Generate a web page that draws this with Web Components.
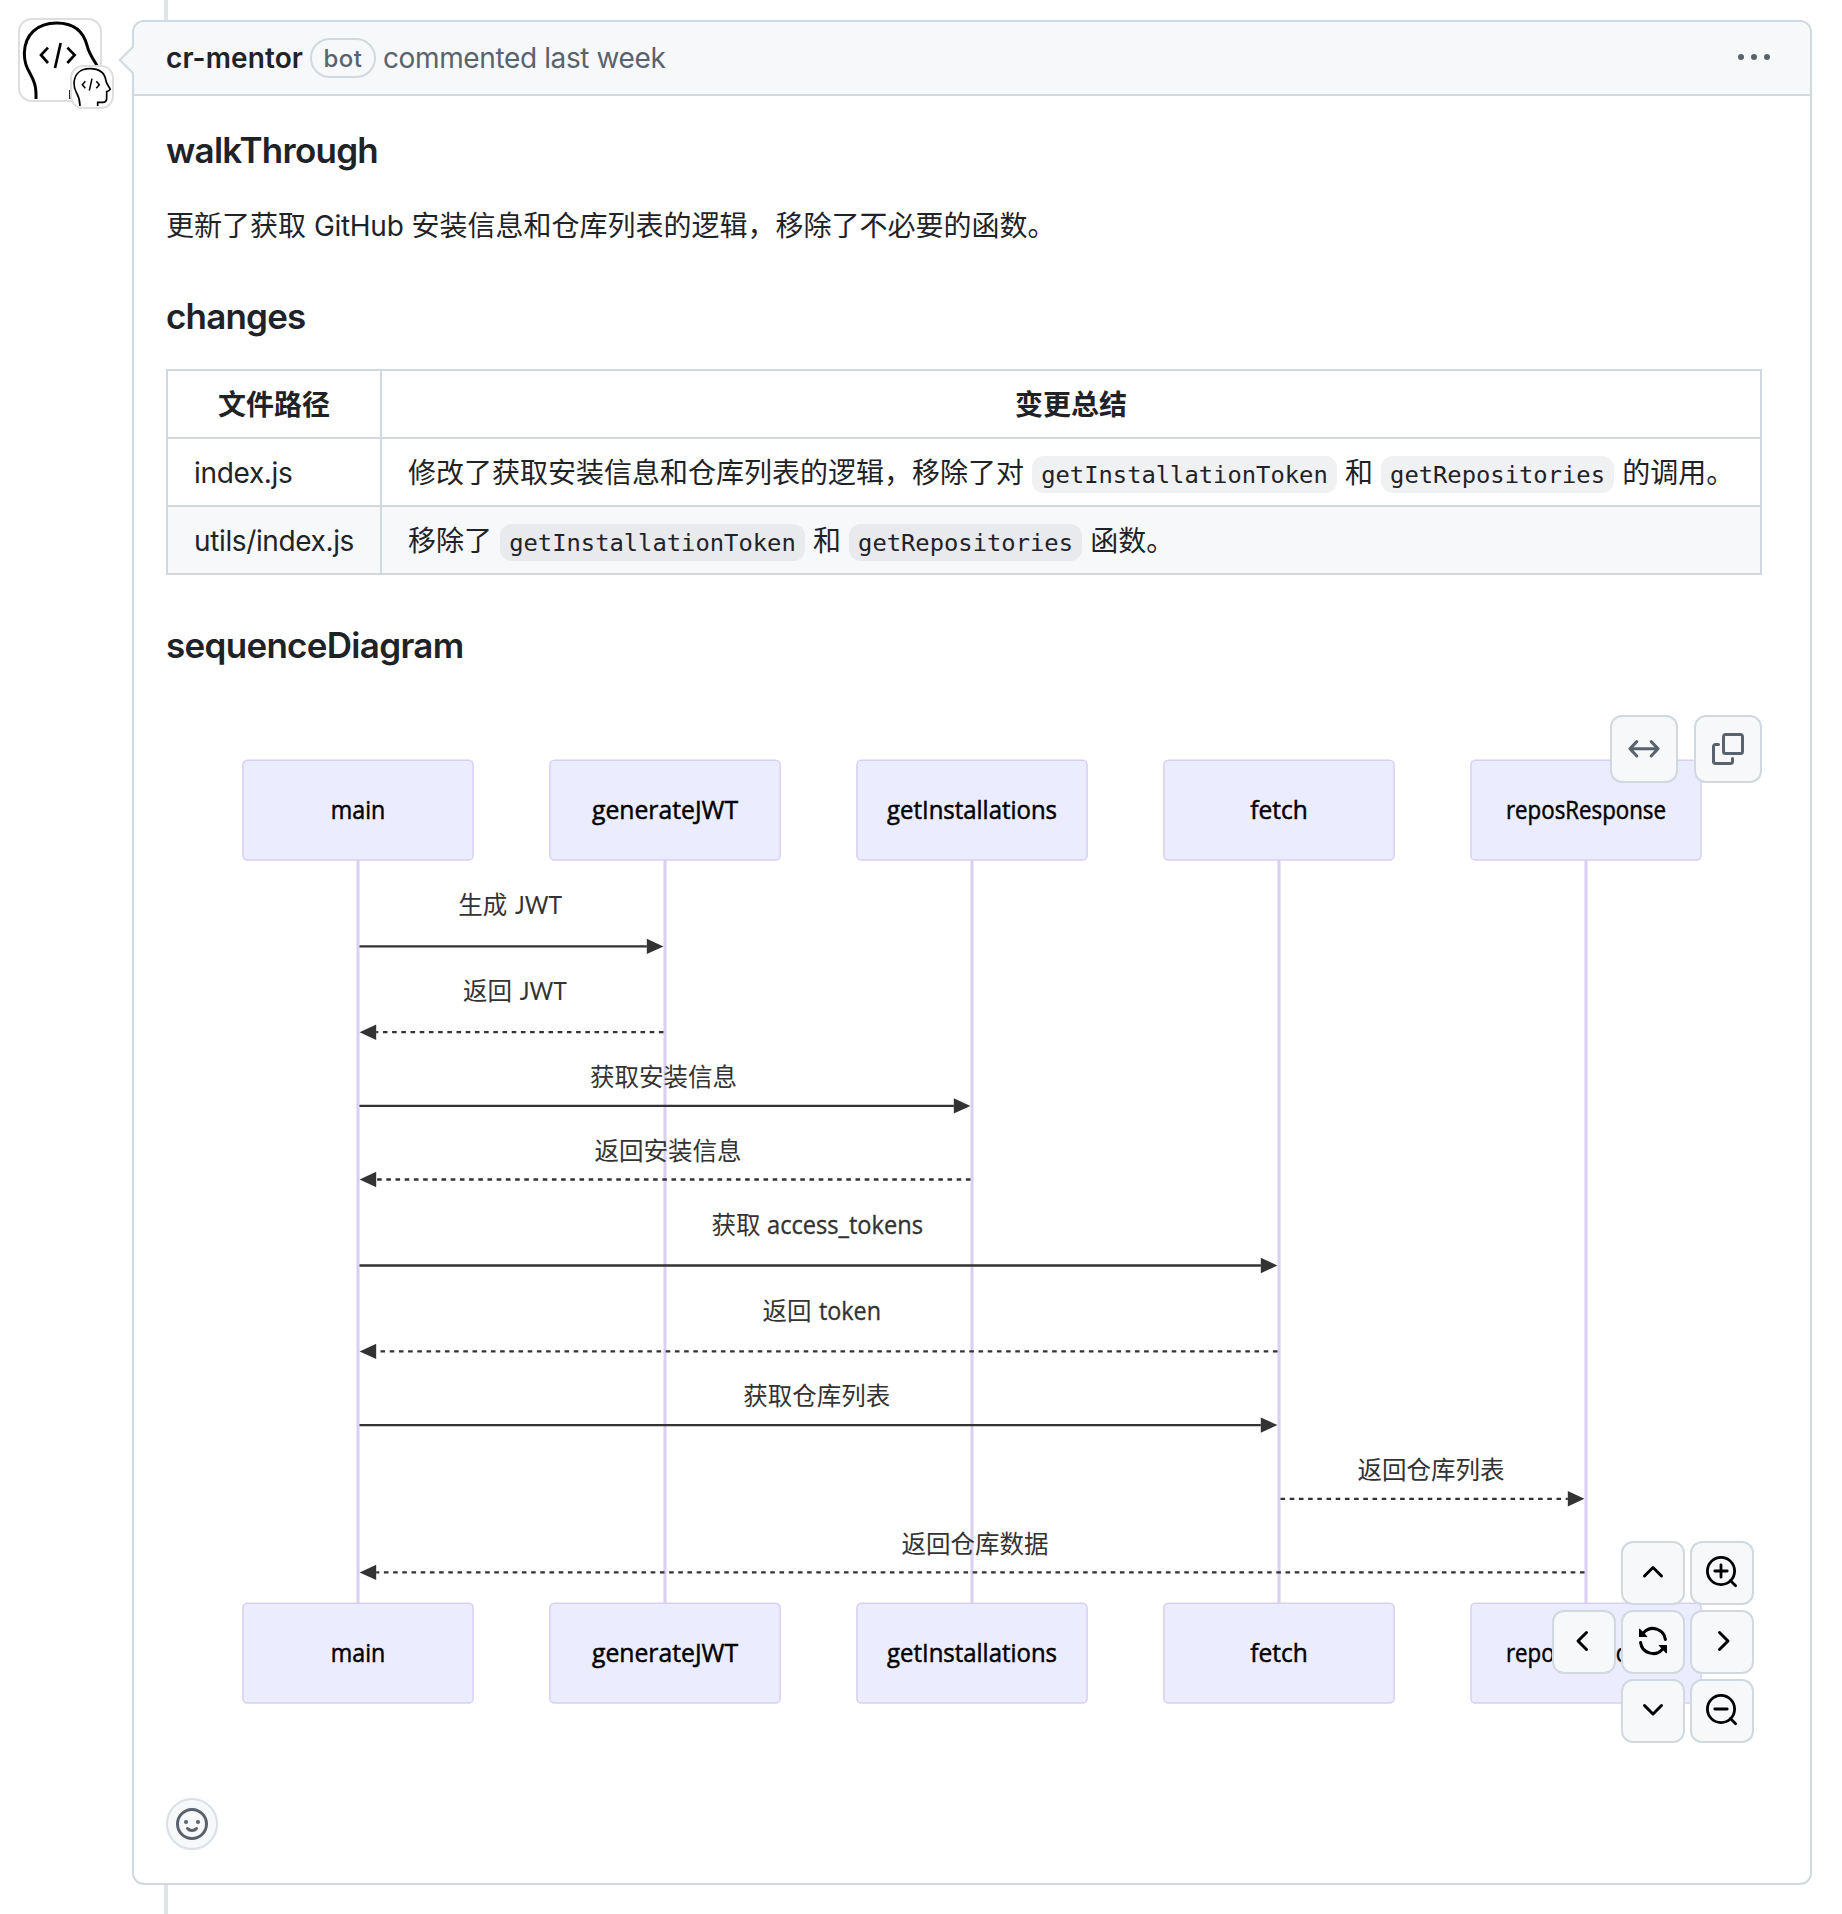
<!DOCTYPE html>
<html lang="zh-CN">
<head>
<meta charset="utf-8">
<title>cr-mentor comment</title>
<style>
html,body{margin:0;padding:0}
body{background:#fff;color:#1f2328;font-family:Inter,"Noto Sans CJK SC",sans-serif;font-size:28px;line-height:42px;overflow:hidden}
</style>
</head>
<body>
<timeline-item>
  <bot-avatar slot="avatar"></bot-avatar>
  <comment-card>
    <comment-header slot="header"></comment-header>
    <md-heading><fit-text w="212">walkThrough</fit-text></md-heading>
    <md-paragraph>更新了获取 <fit-text w="89.6">GitHub</fit-text> 安装信息和仓库列表的逻辑，移除了不必要的函数。</md-paragraph>
    <md-heading><fit-text w="139.5">changes</fit-text></md-heading>
    <changes-table></changes-table>
    <md-heading><fit-text w="297.5">sequenceDiagram</fit-text></md-heading>
    <sequence-diagram></sequence-diagram>
    <reaction-button></reaction-button>
  </comment-card>
</timeline-item>
<script>
const define=(name,html,init)=>customElements.define(name,class extends HTMLElement{
  constructor(){super();this.attachShadow({mode:'open'}).innerHTML=html;}
  connectedCallback(){if(init)init.call(this);}
});

define('md-heading','<style>:host{display:block;height:43.5px;line-height:45.5px;font-size:35px;font-weight:600;margin:48px 0 32px}:host(:first-of-type){margin-top:0}</style><slot></slot>');
define('md-paragraph','<style>:host{display:block;height:42px;line-height:44px;white-space:nowrap}</style><slot></slot>');
define('md-code','<style>:host{display:inline;font:23.8px "DejaVu Sans Mono",monospace;background:rgba(129,139,152,.12);border-radius:12px;padding:4.7px 9.4px}</style><slot></slot>');

const ICONS={
  both:'<path d="M1 7.9h14M4.4 4.3.95 7.9l3.45 3.6M11.6 4.3 15.05 7.9l-3.45 3.6" fill="none" stroke="currentColor" stroke-width="1.5" stroke-linecap="round" stroke-linejoin="round"/>',
  copy:'<path d="M0 6.75C0 5.784.784 5 1.75 5h1.5a.75.75 0 0 1 0 1.5h-1.5a.25.25 0 0 0-.25.25v7.5c0 .138.112.25.25.25h7.5a.25.25 0 0 0 .25-.25v-1.5a.75.75 0 0 1 1.5 0v1.5A1.75 1.75 0 0 1 9.25 16h-7.5A1.75 1.75 0 0 1 0 14.25Z"/><path d="M5 1.75C5 .784 5.784 0 6.75 0h7.5C15.216 0 16 .784 16 1.75v7.5A1.75 1.75 0 0 1 14.25 11h-7.5A1.75 1.75 0 0 1 5 9.25Zm1.75-.25a.25.25 0 0 0-.25.25v7.5c0 .138.112.25.25.25h7.5a.25.25 0 0 0 .25-.25v-7.5a.25.25 0 0 0-.25-.25Z"/>',
  up:'<path d="M3.22 10.53a.749.749 0 0 1 0-1.06l4.25-4.25a.749.749 0 0 1 1.06 0l4.25 4.25a.749.749 0 0 1-1.06 1.06L8 6.811 4.28 10.53a.749.749 0 0 1-1.06 0Z"/>',
  down:'<path d="M12.78 5.22a.749.749 0 0 1 0 1.06l-4.25 4.25a.749.749 0 0 1-1.06 0L3.22 6.28a.749.749 0 0 1 1.06-1.06L8 8.939l3.72-3.719a.749.749 0 0 1 1.06 0Z"/>',
  left:'<path d="M9.78 12.78a.75.75 0 0 1-1.06 0L4.47 8.53a.75.75 0 0 1 0-1.06l4.25-4.25a.75.75 0 0 1 1.06 1.06L6.06 8l3.72 3.72a.75.75 0 0 1 0 1.06Z"/>',
  right:'<path d="M6.22 3.22a.75.75 0 0 1 1.06 0l4.25 4.25a.75.75 0 0 1 0 1.06l-4.25 4.25a.75.75 0 0 1-1.06-1.06L9.94 8 6.22 4.28a.75.75 0 0 1 0-1.06Z"/>',
  sync:'<path d="M1.705 8.005a.75.75 0 0 1 .834.656 5.5 5.5 0 0 0 9.592 2.97l-1.204-1.204a.25.25 0 0 1 .177-.427h3.646a.25.25 0 0 1 .25.25v3.646a.25.25 0 0 1-.427.177l-1.38-1.38A7.002 7.002 0 0 1 1.05 8.84a.75.75 0 0 1 .656-.834ZM8 2.5a5.487 5.487 0 0 0-4.131 1.869l1.204 1.204A.25.25 0 0 1 4.896 6H1.25A.25.25 0 0 1 1 5.75V2.104a.25.25 0 0 1 .427-.177l1.38 1.38A7.002 7.002 0 0 1 14.95 7.16a.75.75 0 0 1-1.49.178A5.5 5.5 0 0 0 8 2.5Z"/>',
  zoomin:'<g fill="none" stroke="currentColor" stroke-width="1.4"><circle cx="7.5" cy="7.5" r="6.8"/><path d="M4.4 7.5h6.2M7.5 4.4v6.2" stroke-linecap="round"/><path d="m12.2 12.3 2.6 2.6" stroke-linecap="round"/></g>',
  zoomout:'<g fill="none" stroke="currentColor" stroke-width="1.4"><circle cx="7.5" cy="7.5" r="6.8"/><path d="M4.4 7.5h6.2" stroke-linecap="round"/><path d="m12.2 12.3 2.6 2.6" stroke-linecap="round"/></g>',
  kebab:'<circle cx="1.5" cy="8" r="1.5"/><circle cx="8" cy="8" r="1.5"/><circle cx="14.5" cy="8" r="1.5"/>',
  smiley:'<circle cx="8" cy="8" r="7.25" fill="none" stroke="currentColor" stroke-width="1.5"/><circle cx="5" cy="7" r="1"/><circle cx="11" cy="7" r="1"/><path d="M5.75 10.25c.5.6 1.25 1 2.25 1s1.75-.4 2.25-1" fill="none" stroke="currentColor" stroke-width="1.5" stroke-linecap="round"/>'
};
define('oct-icon','<style>:host{display:block;width:32px;height:32px}svg{display:block}</style><svg width="32" height="32" viewBox="0 0 16 16" fill="currentColor" overflow="visible"></svg>',function(){
  this.shadowRoot.querySelector('svg').innerHTML=ICONS[this.getAttribute('name')];
});
define('tool-button','<style>:host{box-sizing:border-box;display:flex;align-items:center;justify-content:center;width:var(--size,68px);height:var(--size,68px);border:2px solid #d1d9e0;border-radius:12px;background:#f6f8fa}</style><slot></slot>');

define('bot-avatar',`<style>
:host{display:block;position:relative;width:84px;height:84px}
svg{display:block;box-sizing:border-box;border:2px solid #dedede;background:#fff}
.big{border-radius:14px}.small{position:absolute;left:52px;top:47px;border-radius:13px}
path{fill:none;stroke:#000}
</style>
<svg class="big" width="84" height="84" viewBox="60 60 240 240" stroke-width="9">
<path d="M108 297C109 258 103 244 91 222C79 201 73 187 73 160C74 104 112 69 170 69C220 69 251 94 262 139C266 160 280 179 296 204M212 270V297"/>
<path d="m144 143-21 22 21 24M182 129l-17 75M202 143l22 22-22 24" stroke-width="8"/></svg>
<svg class="small" width="44" height="44" viewBox="216 201 120 120" stroke-width="5">
<path d="M240 318C240 296 235 288 229 277Q222 266 222 248C224 221 242 206 270 206C300 206 315 221 318 243C320 252 327 260 331 268Q326 274 320 275V296Q319 307 309 307H293V318"/>
<path d="m256 244-9 10 9 11M276 236l-8 36M289 244l9 10-9 11" stroke-width="4.5"/></svg>`);

define('timeline-item',`<style>
:host{display:flex;flex-direction:column;height:1914px}
.rail{width:4px;margin-left:164px;background:#dfe4e9}
.top{height:20px}.bottom{flex:1}
.row{display:flex;height:1865px}
.avatar{box-sizing:border-box;width:132px;padding-left:18px;margin-top:-2px}
</style><div class="rail top"></div><div class="row"><div class="avatar"><slot name="avatar"></slot></div><slot></slot></div><div class="rail bottom"></div>`);

define('comment-card',`<style>
:host{box-sizing:border-box;position:relative;display:flex;flex-direction:column;width:1680px;height:1865px;border:2px solid #d1d9e0;border-radius:12px;background:#fff}
.body{padding:32px 48px 33px 32px}
.caret{position:absolute;left:-16px;top:22px;display:block}
</style><slot name="header"></slot><div class="body"><slot></slot></div>
<svg class="caret" width="18" height="32" viewBox="0 0 18 32"><path d="M18 1.5 2 16l16 14.5z" fill="#f6f8fa"/><path d="M15.3 2.5 1.8 16l13.5 13.5" fill="none" stroke="#d1d9e0" stroke-width="2"/></svg>`);

define('comment-header',`<style>
:host{box-sizing:border-box;display:flex;align-items:center;height:74px;padding:0 40px 0 32px;background:#f6f8fa;border-bottom:2px solid #d1d9e0;border-radius:10px 10px 0 0;color:#59636e;white-space:nowrap}
b{font-weight:600;color:#1f2328;height:42px}
.bot{box-sizing:border-box;height:40px;width:66px;line-height:38px;margin:0 7px 0 7px;border:2px solid #d1d9e0;border-radius:20px;text-align:center;font-size:24px;font-weight:500}
.when{height:42px}
oct-icon{margin:-2px 0 0 auto}
</style><b><fit-text w="137">cr-mentor</fit-text></b><span class="bot"><fit-text w="39">bot</fit-text></span><span class="when"><fit-text w="282.5">commented last week</fit-text></span><oct-icon name="kebab"></oct-icon>`);

define('changes-table',`<style>
:host{display:block;height:206px}
table{border-collapse:collapse;table-layout:fixed;width:1596px;height:206px}
th,td{box-sizing:border-box;border:2px solid #d1d9e0;height:68px;padding:1.5px 0 0 26px;text-align:left;white-space:nowrap;line-height:42px;word-spacing:-.1px}
th{font-weight:600;text-align:center;padding:1.5px 0 0}
.path{width:214px}
td.path{padding-left:26px}
tr:last-child{background:#f6f8fa}
</style><table><tr><th class="path">文件路径</th><th>变更总结</th></tr>
<tr><td class="path"><fit-text w="98.5">index.js</fit-text></td><td>修改了获取安装信息和仓库列表的逻辑，移除了对 <md-code>getInstallationToken</md-code> 和 <md-code>getRepositories</md-code> 的调用。</td></tr>
<tr><td class="path"><fit-text w="160">utils/index.js</fit-text></td><td>移除了 <md-code>getInstallationToken</md-code> 和 <md-code>getRepositories</md-code> 函数。</td></tr></table>`);

/* Participants: [name, label width]; lifelines are 307px apart. */
const actors=[['main',54.5],['generateJWT',146],['getInstallations',170],['fetch',57.5],['reposResponse',160]];
const cx=i=>358+307*i;
/* Messages: from, to, line y, dashed, CJK text, CJK x, baseline, Latin text, Latin x, Latin width */
const messages=[
 [0,1,946.4,0,'生成',458.2,914.2,'JWT',515,47],
 [1,0,1032.2,1,'返回',463,1000.2,'JWT',519.7,47],
 [0,2,1105.9,0,'获取安装信息',590,1086.4],
 [2,0,1179.5,1,'返回安装信息',594.4,1160.3],
 [0,3,1265.5,0,'获取',711.5,1234,'access_tokens',767,156],
 [3,0,1351.4,1,'返回',762.6,1320,'token',819,62],
 [0,3,1425.1,0,'获取仓库列表',743.3,1405.4],
 [3,4,1498.8,1,'返回仓库列表',1357.6,1479.4],
 [4,0,1572.4,1,'返回仓库数据',901.5,1553]
];
const box=y=>actors.map(([n,w],i)=>`<rect x="${cx(i)-115.1}" y="${y}" width="230.2" height="99.8" rx="4.6" fill="#ececff" stroke="#dacef3" stroke-width="1.5"/><text class="actor" x="${cx(i)-w/2}" y="${y+59}" textLength="${w}" lengthAdjust="spacingAndGlyphs">${n}</text>`).join('');
const line=([a,b,y,d])=>{const r=b>a,x1=cx(a)+(r?1.5:-1.5),tip=cx(b)+(r?-1.6:1.6),back=tip+(r?-16.6:16.6);
 return `<path d="M${x1} ${y}H${back}" stroke="#333" stroke-width="2.3"${d?' stroke-dasharray="4.6 4.6"':''}/><path d="M${tip} ${y}L${back} ${y-7.7}V${y+7.7}Z" fill="#333"/>`;};
const label=m=>`<text x="${m[5]}" y="${m[6]}">${m[4]}</text>`+(m[7]?`<text class="latin${m[7]==='JWT'?' caps':''}" x="${m[8]}" y="${m[6]-.4}" textLength="${m[9]}" lengthAdjust="spacingAndGlyphs">${m[7]}</text>`:'');
define('sequence-diagram',`<style>
:host{display:block;position:relative;height:1051.5px}
svg.d{display:block}
text{font-family:"Open Sans","Noto Sans CJK SC",sans-serif;font-size:24.5px;fill:#333}
.actor,.latin{font-size:25px;stroke:#333;stroke-width:.35px}
.actor{fill:#000;stroke:#000;stroke-width:.5px}
.caps{font-family:Lato,sans-serif;stroke:none}
.actions{position:absolute;right:0;top:16.5px;display:flex;gap:16px;color:#59636e}
.pan{position:absolute;right:8px;top:842.5px;display:grid;grid-template-columns:repeat(3,64px);gap:5px;color:#000;--size:64px}
.pan oct-icon{margin-top:-2px}
</style><svg class="d" width="1596" height="1051" viewBox="166 699 1596 1051">
${actors.map((_,i)=>`<path d="M${cx(i)} 860V1603" stroke="#dacef3" stroke-width="3"/>`).join('')}
${box(760.2)}${box(1603.2)}${messages.map(label).join('')}${messages.map(line).join('')}</svg>
<div class="actions"><tool-button><oct-icon name="both"></oct-icon></tool-button><tool-button><oct-icon name="copy"></oct-icon></tool-button></div>
<div class="pan"><span></span><tool-button><oct-icon name="up"></oct-icon></tool-button><tool-button><oct-icon name="zoomin"></oct-icon></tool-button>
<tool-button><oct-icon name="left"></oct-icon></tool-button><tool-button><oct-icon name="sync"></oct-icon></tool-button><tool-button><oct-icon name="right"></oct-icon></tool-button>
<span></span><tool-button><oct-icon name="down"></oct-icon></tool-button><tool-button><oct-icon name="zoomout"></oct-icon></tool-button></div>`);

define('reaction-button','<style>:host{box-sizing:border-box;display:flex;align-items:center;justify-content:center;width:52px;height:52px;margin-top:48px;border:2px solid #dae0e7;border-radius:50%;background:#f6f8fa;color:#59636e}</style><oct-icon name="smiley"></oct-icon>');

/* Inline text tracked to an exact advance width; registered last so that its surroundings already carry their fonts. */
define('fit-text','<style>:host{display:inline-block;white-space:nowrap}</style><slot></slot>',function(){
  const n=this.textContent.length, w=parseFloat(this.getAttribute('w'));
  const natural=this.getBoundingClientRect().width;
  this.style.letterSpacing=((w-natural)/n).toFixed(3)+'px';
});
</script>
</body>
</html>
